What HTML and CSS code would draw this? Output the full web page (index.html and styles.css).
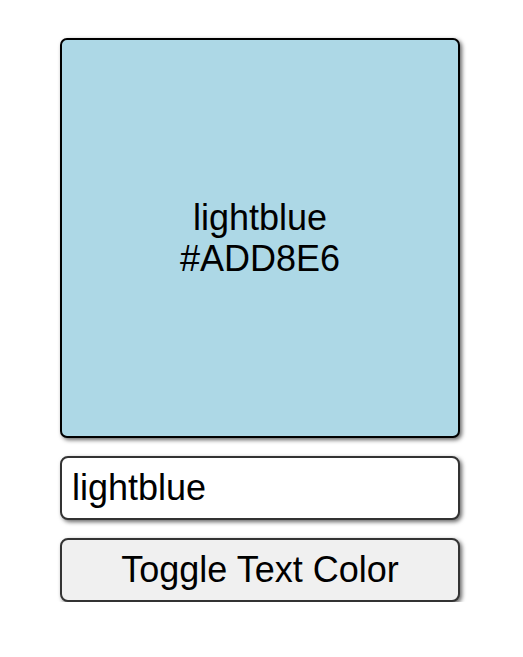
FILE: index.html
```html
<!DOCTYPE html>
<html lang="en">
<head>
<meta charset="utf-8">
<title>Color Box</title>
<link rel="stylesheet" href="styles.css">
</head>
<body>
<main class="app">
  <div class="swatch">
    <div class="swatch-label">lightblue<br>#ADD8E6</div>
  </div>
  <input class="color-input" type="text" value="lightblue">
  <button class="toggle-btn" type="button">Toggle Text Color</button>
</main>
</body>
</html>
```

FILE: styles.css
```css
html, body {
  margin: 0;
  padding: 0;
  background: #ffffff;
}

body {
  font-family: "Liberation Sans", Arial, sans-serif;
}

.app {
  display: flex;
  flex-direction: column;
  align-items: center;
  gap: 18px;
  padding-top: 38px;
  padding-right: 3px;
}

.swatch {
  box-sizing: border-box;
  width: 400px;
  height: 400px;
  background: #add8e6;
  border: 2px solid #000;
  border-radius: 7px;
  box-shadow: 2px 2px 4px rgba(0, 0, 0, 0.6);
  display: flex;
  align-items: center;
  justify-content: center;
}

.swatch-label {
  font-size: 36px;
  line-height: 41px;
  color: #000;
  text-align: center;
}

.color-input,
.toggle-btn {
  box-sizing: border-box;
  width: 400px;
  height: 64px;
  margin: 0;
  border: 2px solid #333;
  border-radius: 8px;
  box-shadow: 2px 2px 4px rgba(0, 0, 0, 0.6);
  font-family: "Liberation Sans", Arial, sans-serif;
  font-size: 36px;
  color: #000;
}

.color-input {
  background: #fff;
  padding: 0 10px;
  outline: none;
}

.toggle-btn {
  background: #f0f0f0;
  padding: 0;
  text-align: center;
}
```
